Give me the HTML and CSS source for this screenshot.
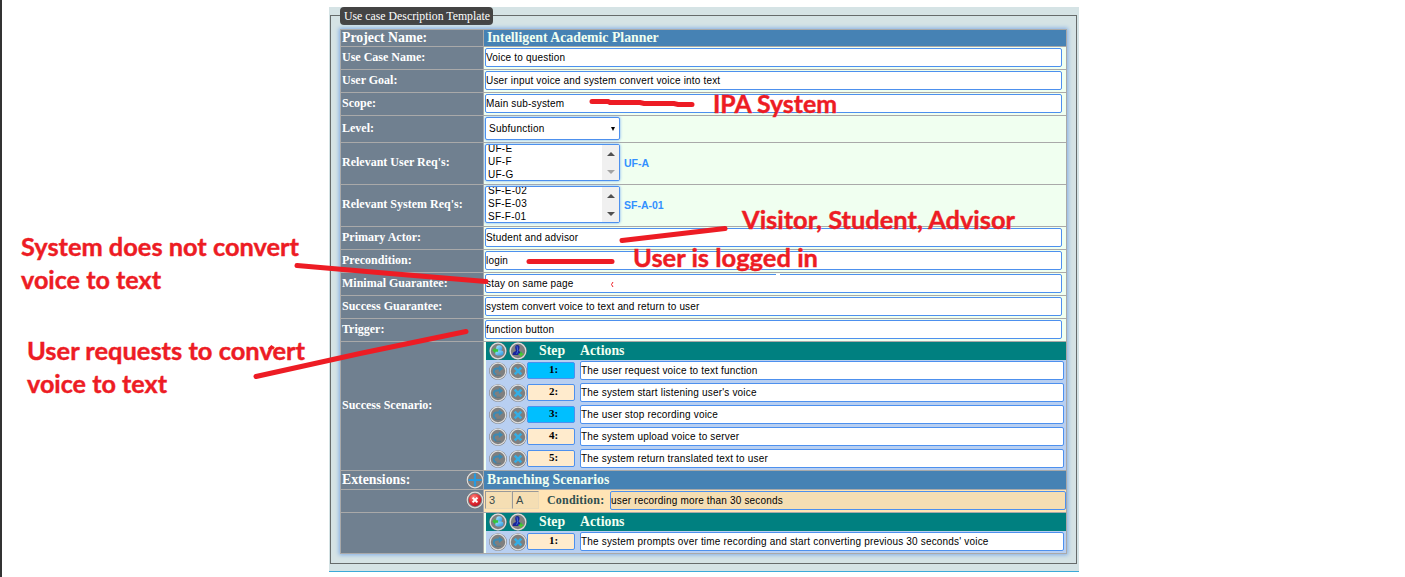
FILE: index.html
```html
<!DOCTYPE html>
<html lang="en">
<head>
<meta charset="utf-8">
<title>Use case Description Template</title>
<link rel="stylesheet" href="styles.css">
</head>
<body>
<svg class="defs" aria-hidden="true">
  <defs>
    <radialGradient id="red" cx=".4" cy=".3" r=".8"><stop offset="0" stop-color="#ff8a80"/><stop offset=".6" stop-color="#e02830"/><stop offset="1" stop-color="#b01020"/></radialGradient>
    <linearGradient id="sky" x1="0" y1="0" x2="1" y2="1"><stop offset="0" stop-color="#a8ecff"/><stop offset="1" stop-color="#2590e0"/></linearGradient>
  </defs>
  <symbol id="disc" viewBox="0 0 18 18"><circle cx="9" cy="9" r="8.8" fill="#707070"/><circle cx="9" cy="9" r="7.8" fill="#7f7f7f" stroke="#dedede" stroke-width="1.2"/></symbol>
  <symbol id="system" viewBox="0 0 18 18"><use href="#disc" width="18" height="18"/><circle cx="10.2" cy="6.3" r="3" fill="url(#sky)"/><rect x="6" y="8.4" width="8.5" height="5" rx="2.4" fill="url(#sky)"/><path d="M3.2 8.3 6.4 5.4v1.8h2.7v2.5H6.4v1.7z" fill="#35c43b"/></symbol>
  <symbol id="actor" viewBox="0 0 18 18"><use href="#disc" width="18" height="18"/><path d="M8.2 3c2 0 2.600 1.400 2.300 3-.2 1.400-.8 2-.7 3l3.200 1.800V13H3.600c0-2.400.8-3 3.200-4C7 8 6.200 7 6.200 5.500 6.200 4 6.800 3 8.200 3z" fill="#18249a"/><path d="M8 4.200l.8 4.600-1.200 3" stroke="#4668df" fill="none"/><path d="M12 9.800v5M9.500 12.300h5" stroke="#48d22d" stroke-width="1.500"/></symbol>
  <symbol id="redo" viewBox="0 0 18 18"><use href="#disc" width="18" height="18"/><path d="M7.300 12.500C3.800 11.800 3.700 6.800 8 6.500h3" fill="none" stroke="#3c8ab4" stroke-width="1.900"/><path d="M9.800 3.400 14 6.800 9.800 10z" fill="#3c8ab4"/><path d="M6 13.300h6" stroke="#5b7887"/></symbol>
  <symbol id="cross" viewBox="0 0 18 18"><use href="#disc" width="18" height="18"/><path d="M5.700 5.700 12.300 12.300M12.300 5.700 5.700 12.300" stroke="#35aee5" stroke-width="2.600"/></symbol>
  <symbol id="plus" viewBox="0 0 18 18"><use href="#disc" width="18" height="18"/><path d="M9 2.500v13M2.500 9h13" stroke="#269be2" stroke-width="2.200"/></symbol>
  <symbol id="remove" viewBox="0 0 18 18"><use href="#disc" width="18" height="18"/><circle cx="9" cy="9" r="6.200" fill="url(#red)"/><path d="M6.600 6.600l4.800 4.800M11.400 6.600l-4.800 4.800" stroke="#fff" stroke-width="2"/></symbol>
</svg>
<main class="page">
  <section class="panel">
    <div class="frame">
      <div class="legend"><span>Use case Description Template</span></div>
      <div class="sheet">
        <div class="row head"><div class="label big">Project Name:</div><div class="value title">Intelligent Academic Planner</div></div>
        <div class="row"><div class="label">Use Case Name:</div><div class="value"><div class="input">Voice to question</div></div></div>
        <div class="row"><div class="label">User Goal:</div><div class="value"><div class="input">User input voice and system convert voice into text</div></div></div>
        <div class="row"><div class="label">Scope:</div><div class="value"><div class="input">Main sub-system</div></div></div>
        <div class="row level"><div class="label">Level:</div><div class="value"><div class="select"><span>Subfunction</span><i class="tri down"></i></div></div></div>
        <div class="row multi"><div class="label">Relevant User Req's:</div><div class="value"><div class="list"><div class="options"><span>UF-E</span><span>UF-F</span><span>UF-G</span></div><div class="scroll"><i class="tri up"></i><i class="tri down faint"></i></div></div><b class="picked">UF-A</b></div></div>
        <div class="row multi"><div class="label">Relevant System Req's:</div><div class="value"><div class="list"><div class="options"><span>SF-E-02</span><span>SF-E-03</span><span>SF-F-01</span></div><div class="scroll"><i class="tri up"></i><i class="tri down"></i></div></div><b class="picked">SF-A-01</b></div></div>
        <div class="row"><div class="label">Primary Actor:</div><div class="value"><div class="input">Student and advisor</div></div></div>
        <div class="row"><div class="label">Precondition:</div><div class="value"><div class="input">login</div></div></div>
        <div class="row"><div class="label">Minimal Guarantee:</div><div class="value"><div class="input">stay on same page</div></div></div>
        <div class="row"><div class="label">Success Guarantee:</div><div class="value"><div class="input">system convert voice to text and return to user</div></div></div>
        <div class="row"><div class="label">Trigger:</div><div class="value"><div class="input">function button</div></div></div>
        <div class="row scenario"><div class="label">Success Scenario:</div><div class="value inset"><div class="steps">
          <div class="stephead"><svg><use href="#system"/></svg><svg><use href="#actor"/></svg><span>Step</span><span>Actions</span></div>
          <div class="step"><svg><use href="#redo"/></svg><svg><use href="#cross"/></svg><div class="num user">1:</div><div class="input">The user request voice to text function</div></div>
          <div class="step"><svg><use href="#redo"/></svg><svg><use href="#cross"/></svg><div class="num">2:</div><div class="input">The system start listening user's voice</div></div>
          <div class="step"><svg><use href="#redo"/></svg><svg><use href="#cross"/></svg><div class="num user">3:</div><div class="input">The user stop recording voice</div></div>
          <div class="step"><svg><use href="#redo"/></svg><svg><use href="#cross"/></svg><div class="num">4:</div><div class="input">The system upload voice to server</div></div>
          <div class="step"><svg><use href="#redo"/></svg><svg><use href="#cross"/></svg><div class="num">5:</div><div class="input">The system return translated text to user</div></div>
        </div></div></div>
        <div class="row ext"><div class="label big">Extensions:<svg><use href="#plus"/></svg></div><div class="value title">Branching Scenarios</div></div>
        <div class="row"><div class="label"><svg><use href="#remove"/></svg></div><div class="value cond"><div class="ref">3</div><div class="ref">A</div><b>Condition:</b><div class="input">user recording more than 30 seconds</div></div></div>
        <div class="row branch"><div class="label"></div><div class="value inset"><div class="steps">
          <div class="stephead"><svg><use href="#system"/></svg><svg><use href="#actor"/></svg><span>Step</span><span>Actions</span></div>
          <div class="step"><svg><use href="#redo"/></svg><svg><use href="#cross"/></svg><div class="num">1:</div><div class="input">The system prompts over time recording and start converting previous 30 seconds' voice</div></div>
        </div></div></div>
      </div>
    </div>
  </section>
</main>
<svg class="notes" viewBox="0 0 1405 577">
  <g class="strokes">
    <path d="M592 101.500H608L610 102.500H640L644 103.500H674L678 104.500H692"/>
    <path d="M622 240.500 725 228.500"/>
    <path d="M529 261.500H612"/>
    <path d="M297 265.500 390 273.500 486 281.500"/>
    <path d="M256 376.500 360 353.500 466 331.500"/>
  </g>
  <path d="M269 349.500l2.500-2.500 2.500 1.500" class="fleck"/>
  <path d="M613 282l-1.500 2.500 1.500 2.500" class="speck"/>
  <path d="M776 274.500h4" class="gap"/>
  <g class="words">
    <text x="713" y="113" textLength="124" lengthAdjust="spacingAndGlyphs">IPA System</text>
    <text x="742" y="229" textLength="273" lengthAdjust="spacingAndGlyphs">Visitor, Student, Advisor</text>
    <text x="633" y="267" textLength="185" lengthAdjust="spacingAndGlyphs">User is logged in</text>
    <text x="21" y="256" textLength="278" lengthAdjust="spacingAndGlyphs">System does not convert</text>
    <text x="21" y="289" textLength="140" lengthAdjust="spacingAndGlyphs">voice to text</text>
    <text x="27" y="360" textLength="278" lengthAdjust="spacingAndGlyphs">User requests to convert</text>
    <text x="27" y="393" textLength="140" lengthAdjust="spacingAndGlyphs">voice to text</text>
  </g>
</svg>
</body>
</html>
```
FILE: styles.css
```css
* { box-sizing: border-box; }
body { margin: 0; background: #fff; font-family: "Liberation Serif", serif; }
.defs { position: absolute; width: 0; height: 0; }
.page { width: 1405px; height: 577px; padding: 7px 0 0 327px; border-left: 2px solid #333; overflow: hidden; }
.panel { width: 750px; height: 565px; padding: 8px 2px 0 1px; background: #d5e3e5; border-bottom: 1px solid #3ba9d8; }
.frame { display: flex; flex-direction: column; height: 549px; border: 1px solid #666b6b; padding: 0 9px; }
.legend { display: flex; align-items: flex-start; height: 13px; }
.legend span { width: 153px; height: 18px; margin-top: -9px; padding-left: 4px; border-radius: 4px; background: #444; color: #fff; font-size: 11.8px; line-height: 18px; white-space: nowrap; }
.sheet { width: 727px; border: 1px solid #a9a9a9; border-bottom: 0; box-shadow: 0 0 4px 1px #83aee6; }
.row { display: flex; height: 23px; }
.label { display: flex; flex: none; justify-content: space-between; width: 143px; padding: 0 0 2px 1px; align-items: center; background: #708090; color: #fff; font-size: 12px; font-weight: bold; border-right: 1px solid #a9a9a9; border-bottom: 1px solid #a9a9a9; white-space: nowrap; }
.value { flex: 1; min-width: 0; display: flex; padding: 1px 0 0 1px; background: #f0fff0; border-bottom: 1px solid #a9a9a9; }
.head { height: 17px; }
.label.big { font-size: 13.8px; padding-bottom: 0; }
.value.title { padding: 0 0 0 3px; align-items: center; background: #4682b4; color: #f0fff0; font-size: 13.8px; font-weight: bold; }
.level { height: 27px; }
.multi { height: 42px; }
.scenario { height: 129px; }
.ext { height: 19px; }
.ext .label.big { padding-bottom: 1px; }
.branch { height: 41px; }
.input { width: 577px; height: 19px; border: 1px solid #4d90ee; border-radius: 2px; background: #fff; color: #000; font: 10px/18px "Liberation Sans", sans-serif; letter-spacing: .18px; white-space: nowrap; }
.select, .list { display: flex; width: 135px; border: 1px solid #4d90ee; border-radius: 2px; background: #fff; color: #000; font: 10px/21px "Liberation Sans", sans-serif; letter-spacing: .25px; box-shadow: 0 0 3px #72a8f4; }
.select { height: 23px; justify-content: space-between; align-items: center; padding: 0 4px 0 3px; }
.list { height: 37px; overflow: hidden; }
.options { display: flex; flex-direction: column; flex: 1; padding-left: 2px; margin-top: -3px; line-height: 13px; }
.scroll { width: 17px; background: #f0f0f0; display: flex; flex-direction: column; align-items: center; justify-content: space-between; padding: 7px 0 6px; }
.tri { width: 0; height: 0; border: 4px solid transparent; }
.up { border-top: 0; border-bottom-color: #505050; }
.down { border-bottom: 0; border-top-color: #505050; }
.faint { border-top-color: #a3a3a3; }
.select .tri { border-width: 4px 2.5px 0; border-top-color: #000; }
.picked { align-self: center; margin: -2px 0 0 4px; color: #3390ff; font: bold 10.5px "Liberation Sans", sans-serif; }
.value.inset { padding: 0 0 0 2px; }
.steps { flex: 1; background: #b8cff1; }
.stephead { display: flex; height: 18px; align-items: center; padding-left: 3px; background: #008080; color: #f0fff0; font-size: 13.8px; font-weight: bold; }
.stephead svg, .step svg, .label svg { width: 18px; height: 18px; flex: none; overflow: visible; margin-right: 2px; }
.label svg { margin: 0 -1px 0 auto; }
.stephead span:nth-of-type(1) { width: 51px; padding-left: 10px; }
.step { display: flex; height: 22px; padding: 1px 0 0 3px; }
.step svg { margin-top: 1px; }
.num { width: 48px; height: 17px; margin: 1px 5px 0 -2px; padding-left: 5px; border: 1px solid #4d90ee; border-radius: 2px; background: #ffebcd; text-align: center; font-size: 11px; line-height: 12px; font-weight: bold; }
.num.user { background: #00bfff; }
.step .input { width: 484px; }
.value.cond { background: #ffe4b5; padding-left: 1px; }
.ref { flex: none; width: 27px; height: 18px; padding-left: 3px; border: 1px solid #ead9b7; border-top-color: #999; border-left-color: #999; background: #f5deb3; color: #3b4b4b; font: 11px/17px "Liberation Sans", sans-serif; }
.cond b { flex: none; width: 63px; margin-left: 8px; color: #2f4f4f; font-size: 12px; line-height: 19px; letter-spacing: .2px; }
.cond .input { flex: none; width: 456px; background: #f5deb3; }
.notes { position: absolute; inset: 0; width: 1405px; height: 577px; }
.strokes { fill: none; stroke: #ed1c24; stroke-width: 5; stroke-linecap: round; }
.fleck { fill: none; stroke: #ed1c24; stroke-width: 3; }
.speck { fill: none; stroke: #ed1c24; stroke-width: 1; }
.gap { stroke: #fff; stroke-width: 2; }
.words { fill: #ed1c24; stroke: #ed1c24; stroke-width: .4; font: bold 24px Lato, sans-serif; }
```
